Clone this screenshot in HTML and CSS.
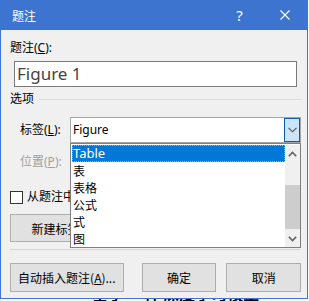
FILE: index.html
```html
<!DOCTYPE html>
<html lang="zh-CN">
<head>
    <meta charset="UTF-8">
    <meta name="viewport" content="width=device-width, initial-scale=1.0">
    <title>题注</title>
    <link rel="stylesheet" href="styles.css">
</head>
<body>
    <div class="window">
        <div class="titlebar">
            <span class="title">题注</span>
            <span class="title-btn help">?</span>
            <span class="title-btn close">
                <svg width="10" height="10" viewBox="0 0 10 10"><path d="M0.5 0.5L9.5 9.5M9.5 0.5L0.5 9.5" stroke="#fff" stroke-width="1.2" fill="none"/></svg>
            </span>
        </div>
        <div class="content">
            <div class="caption-label">题注(<u>C</u>):</div>
            <div class="caption-input">Figure 1</div>

            <div class="group-title">
                <span>选项</span>
                <div class="group-line"></div>
            </div>

            <div class="field-row">
                <label class="field-label">标签(<u>L</u>):</label>
                <div class="combo">
                    <span class="combo-text">Figure</span>
                    <span class="combo-btn">
                        <svg width="9" height="6" viewBox="0 0 9 6"><path d="M0.5 0.8L4.5 4.8L8.5 0.8" stroke="#505050" stroke-width="1.1" fill="none"/></svg>
                    </span>
                    <div class="dropdown">
                        <div class="items">
                            <div class="item selected">Table</div>
                            <div class="item">表</div>
                            <div class="item">表格</div>
                            <div class="item">公式</div>
                            <div class="item">式</div>
                            <div class="item">图</div>
                        </div>
                        <div class="scrollbar">
                            <div class="arrow">
                                <svg width="9" height="6" viewBox="0 0 9 6"><path d="M0.8 5.2L4.5 1.5L8.2 5.2" stroke="#606060" stroke-width="1.6" fill="none"/></svg>
                            </div>
                            <div class="track"><div class="thumb"></div></div>
                            <div class="arrow">
                                <svg width="9" height="6" viewBox="0 0 9 6"><path d="M0.8 0.8L4.5 4.5L8.2 0.8" stroke="#606060" stroke-width="1.6" fill="none"/></svg>
                            </div>
                        </div>
                    </div>
                </div>
            </div>

            <div class="field-row position-row">
                <label class="field-label disabled">位置(<u>P</u>):</label>
                <div class="combo disabled-combo"></div>
            </div>

            <div class="check-row">
                <span class="checkbox"></span>
                <span>从题注中排除标签(<u>E</u>)</span>
            </div>

            <div class="label-buttons">
                <button class="btn new-label">新建标签(<u>N</u>)...</button>
                <button class="btn">删除标签(<u>D</u>)</button>
            </div>

            <div class="separator"></div>

            <div class="footer">
                <button class="btn auto-btn">自动插入题注(<u>A</u>)...</button>
                <button class="btn ok-btn">确定</button>
                <button class="btn cancel-btn">取消</button>
            </div>
        </div>
    </div>
    <div class="doc">
        <p>基于  一种  深度学习模型</p>
    </div>
</body>
</html>
```

FILE: styles.css
```css
body {
    margin: 0;
    background-color: #fff;
    font-family: "Noto Sans", "Noto Sans CJK SC", sans-serif;
    font-size: 12px;
    color: #000;
}
.window {
    width: 308px;
    height: 299px;
    box-sizing: border-box;
    border: 1px solid #3d74cf;
    border-top: none;
    background-color: #f0f0f0;
    display: flex;
    flex-direction: column;
}
.titlebar {
    height: 30px;
    background-color: #3d74cf;
    color: #fff;
    display: flex;
    align-items: center;
    flex-shrink: 0;
}
.title {
    flex: 1;
    padding-left: 11px;
    font-family: "Noto Sans CJK SC", sans-serif;
}
.title-btn {
    width: 45px;
    height: 30px;
    display: flex;
    align-items: center;
    justify-content: center;
}
.help {
    font-size: 15px;
    padding-bottom: 1px;
    box-sizing: border-box;
}
.content {
    padding: 0 6px 0 9px;
}
.caption-label {
    margin-top: 10px;
    line-height: 16px;
}
u {
    text-decoration: underline;
    text-underline-offset: 1px;
}
.caption-input {
    margin: 5px 0 0 4px;
    width: 283px;
    height: 26px;
    box-sizing: border-box;
    border: 1px solid #7a7a7a;
    background-color: #fff;
    color: #444;
    font-size: 17px;
    line-height: 24px;
    padding-left: 2px;
}
.group-title {
    margin-top: 4px;
    display: flex;
    align-items: center;
    line-height: 16px;
}
.group-line {
    flex: 1;
    margin-left: 5px;
    border-top: 1px solid #dcdcdc;
}
.field-row {
    display: flex;
    align-items: center;
    margin-top: 10px;
    padding-left: 10px;
}
.field-label {
    width: 50px;
    line-height: 16px;
}
.field-label.disabled {
    color: #a0a0a0;
}
.combo {
    position: relative;
    width: 231px;
    height: 26px;
    box-sizing: border-box;
    border: 1px solid #a6a6a6;
    background-color: #fff;
    display: flex;
    z-index: 2;
}
.combo-text {
    flex: 1;
    padding-left: 2px;
    line-height: 24px;
}
.combo-btn {
    width: 16px;
    box-sizing: border-box;
    border: 1px solid #0a5ea8;
    background-color: #cce4f7;
    display: flex;
    align-items: center;
    justify-content: center;
}
.dropdown {
    position: absolute;
    left: -1px;
    top: 25px;
    width: 231px;
    height: 105px;
    box-sizing: border-box;
    border: 1px solid #7f7f7f;
    background-color: #fff;
    display: flex;
}
.items {
    flex: 1;
    padding: 1px 0 0 1px;
}
.item {
    height: 17px;
    line-height: 17px;
    padding-left: 1px;
    font-family: "Noto Sans CJK SC", sans-serif;
}
.item.selected {
    background-color: #0078d7;
    color: #fff;
    border: 1px dotted #f0a040;
    box-sizing: border-box;
    line-height: 15px;
    padding-left: 0;
    font-family: "Noto Sans", sans-serif;
    font-size: 13px;
}
.scrollbar {
    width: 15px;
    margin-top: 1px;
    background-color: #f0f0f0;
    display: flex;
    flex-direction: column;
}
.arrow {
    height: 17px;
    display: flex;
    align-items: center;
    justify-content: center;
}
.track {
    flex: 1;
    padding-top: 23px;
    padding-bottom: 0;
}
.thumb {
    height: 44px;
    background-color: #cdcdcd;
}
.position-row {
    margin-top: 0;
    height: 38px;
}
.disabled-combo {
    z-index: 1;
    border-color: #cccccc;
}
.check-row {
    margin-top: 8px;
    display: flex;
    align-items: center;
    gap: 4px;
    line-height: 16px;
    white-space: nowrap;
}
.checkbox {
    width: 13px;
    height: 13px;
    box-sizing: border-box;
    border: 1px solid #333;
    background-color: #fff;
}
.btn {
    height: 29px;
    box-sizing: border-box;
    border: 1px solid #adadad;
    background-color: #e1e1e1;
    font-family: "Noto Sans CJK SC", sans-serif;
    font-size: 12px;
    color: #000;
    padding: 0;
}
.label-buttons {
    margin-top: 9px;
    display: flex;
    gap: 8px;
}
.new-label {
    width: 118px;
    height: 28px;
}
.separator {
    margin-top: 6px;
    border-top: 1px solid #d5d5d5;
    margin-right: 1px;
}
.footer {
    margin-top: 13px;
    display: flex;
}
.auto-btn {
    width: 114px;
}
.ok-btn {
    width: 75px;
    margin-left: 18px;
}
.cancel-btn {
    width: 75px;
    margin-left: 10px;
}
.doc {
    height: 2px;
    overflow: hidden;
}
.doc p {
    margin: -16px 0 0 92px;
    font-family: "Noto Sans CJK SC", sans-serif;
    font-weight: bold;
    font-size: 16px;
    line-height: 20px;
    white-space: nowrap;
}
```
